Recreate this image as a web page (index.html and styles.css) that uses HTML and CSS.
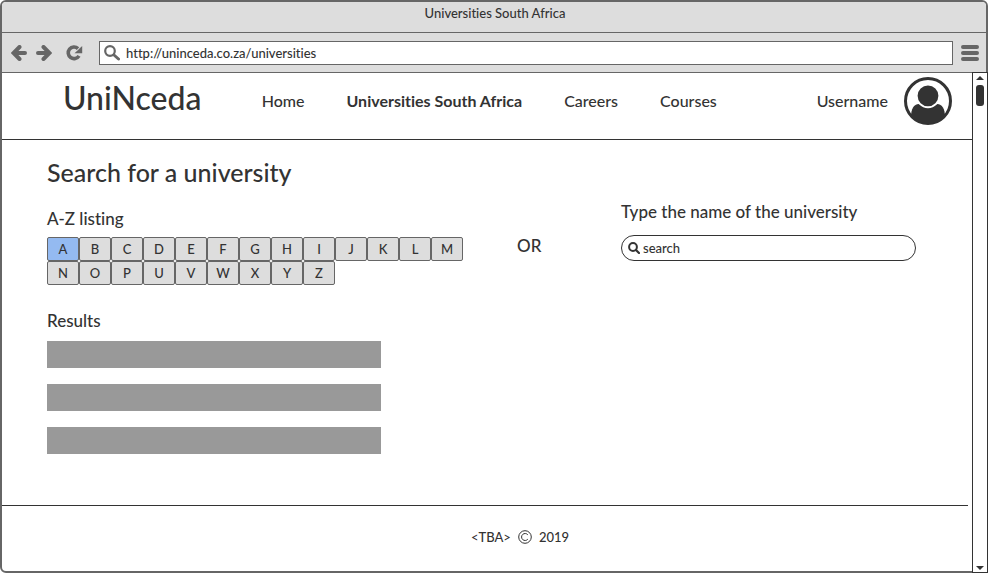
FILE: index.html
```html
<!DOCTYPE html>
<html lang="en">
<head>
<meta charset="utf-8">
<meta name="viewport" content="width=device-width, initial-scale=1">
<title>Universities South Africa</title>
<link rel="stylesheet" href="styles.css">
</head>
<body>
<div class="window">
  <div class="titlebar">Universities South Africa</div>
  <div class="toolbar">
    <div class="controls">
      <button class="icon-button" aria-label="Back"><svg width="16" height="16" viewBox="0 0 16 16"><path d="M8.500 2 2.500 8l6 6M3 8h11" fill="none" stroke="currentColor" stroke-width="4" stroke-linecap="round" stroke-linejoin="miter"/></svg></button>
      <button class="icon-button" aria-label="Forward"><svg width="16" height="16" viewBox="0 0 16 16"><path d="M7.500 2l6 6-6 6M13 8H2" fill="none" stroke="currentColor" stroke-width="4" stroke-linecap="round" stroke-linejoin="miter"/></svg></button>
      <button class="icon-button reload" aria-label="Reload"><svg width="17" height="16" viewBox="0 0 17 16"><path d="M12 3.600A5.800 5.800 0 1 0 13 10.800" fill="none" stroke="currentColor" stroke-width="3.600"/><path d="M16.200 1v7.200H8.500l3-2.600L14 3z" fill="currentColor"/></svg></button>
    </div>
    <label class="address">
      <svg width="16" height="16" viewBox="0 0 16 16" aria-hidden="true"><circle cx="6" cy="6" r="4.800" fill="none" stroke="currentColor" stroke-width="2.200"/><path d="M10 10l4.500 4" stroke="currentColor" stroke-width="3" stroke-linecap="round"/></svg>
      <input type="text" aria-label="Address" value="http://uninceda.co.za/universities">
    </label>
    <button class="icon-button" aria-label="Menu"><svg width="18" height="16" viewBox="0 0 18 16"><path d="M2 2h14M2 8h14M2 14h14" stroke="currentColor" stroke-width="4" stroke-linecap="round"/></svg></button>
  </div>
  <div class="viewport">
    <div class="page">
      <header class="header">
        <a class="brand" href="#">UniNceda</a>
        <nav class="nav">
          <a href="#">Home</a>
          <a class="current" href="#" aria-current="page">Universities South Africa</a>
          <a href="#">Careers</a>
          <a href="#">Courses</a>
        </nav>
        <a class="account" href="#">
          <span>Username</span>
          <svg width="48" height="48" viewBox="0 0 48 48" aria-hidden="true"><circle cx="24" cy="24" r="22.500" fill="#fff" stroke="currentColor" stroke-width="3"/><path d="M7 39c.3-7 2.500-12 8-12h18c5.500 0 7.700 5 8 12A22.500 22.500 0 0 1 7 39z" fill="currentColor"/><circle cx="24" cy="18.800" r="11.400" fill="currentColor" stroke="#fff" stroke-width="2"/></svg>
        </a>
      </header>
      <main class="main">
        <h1>Search for a university</h1>
        <div class="finder">
          <section class="listing">
            <h2>A-Z listing</h2>
            <div class="letters">
              <button class="selected" aria-pressed="true">A</button><button>B</button><button>C</button><button>D</button><button>E</button><button>F</button><button>G</button><button>H</button><button>I</button><button>J</button><button>K</button><button>L</button><button>M</button><button>N</button><button>O</button><button>P</button><button>U</button><button>V</button><button>W</button><button>X</button><button>Y</button><button>Z</button>
            </div>
          </section>
          <p class="or">OR</p>
          <section class="lookup">
            <h2><label for="search">Type the name of the university</label></h2>
            <div class="search">
              <svg width="12" height="12" viewBox="0 0 12 12" aria-hidden="true"><circle cx="5" cy="5" r="3.900" fill="none" stroke="currentColor" stroke-width="2"/><path d="M8 8l3 3" stroke="currentColor" stroke-width="2.200" stroke-linecap="round"/></svg>
              <input id="search" type="search" placeholder="search">
            </div>
          </section>
        </div>
        <section class="results">
          <h2>Results</h2>
          <ul><li></li><li></li><li></li></ul>
        </section>
      </main>
      <footer class="footer">&lt;TBA&gt; <svg width="14" height="14" viewBox="0 0 14 14" role="img" aria-label="Copyright"><circle cx="7" cy="7" r="6.300"/><path d="M9.800 4.800a3.500 3.500 0 1 0 0 4.400"/></svg> 2019</footer>
    </div>
    <div class="scrollbar" aria-hidden="true">
      <svg width="8" height="4" viewBox="0 0 8 4"><path d="M4 0l4 4H0z" fill="currentColor"/></svg>
      <div class="thumb"></div>
      <svg width="8" height="4" viewBox="0 0 8 4"><path d="M4 4L0 0h8z" fill="currentColor"/></svg>
    </div>
  </div>
</div>
</body>
</html>
```

FILE: styles.css
```css
:root {
  --ink: #333;
  --chrome: #666;
  --panel: #ddd;
}

* { box-sizing: border-box; }

body {
  margin: 0;
  color: var(--ink);
  font: 500 13px/20px Lato, "Open Sans", sans-serif;
  font-variant-ligatures: no-common-ligatures;
}

h1, h2, p, ul { margin: 0; padding: 0; font-weight: 500; }
h1 { font-size: 25px; line-height: 32px; }
h2 { font-size: 17px; line-height: 20px; }
a { color: inherit; text-decoration: none; }
button, input { font: inherit; color: inherit; }
svg { display: block; flex: none; }

.window {
  display: flex;
  flex-direction: column;
  min-height: 100vh;
  border: 2px solid var(--chrome);
  border-radius: 6px;
  background: #fff;
}

.titlebar {
  height: 31px;
  padding-top: 1px;
  padding-left: 2px;
  border-bottom: 1px solid var(--chrome);
  border-radius: 4px 4px 0 0;
  background: var(--panel);
  text-align: center;
}

.toolbar {
  display: flex;
  align-items: center;
  height: 40px;
  padding: 0 7px 0 9px;
  border-bottom: 1px solid var(--chrome);
  background: var(--panel);
}

.controls { display: flex; gap: 9px; width: 88px; }

.icon-button {
  padding: 0;
  border: 0;
  background: none;
  color: var(--chrome);
}
.reload { margin-left: 5px; }

.address {
  display: flex;
  flex: 1;
  align-items: center;
  gap: 6px;
  height: 24px;
  margin-right: 8px;
  padding-left: 4px;
  border: 1px solid var(--chrome);
  background: #fff;
  color: var(--chrome);
}

.address input, .search input {
  flex: 1;
  min-width: 0;
  padding: 0;
  border: 0;
  outline: 0;
  background: none;
  color: var(--ink);
}

.viewport { display: flex; flex: 1; }

.page { display: flex; flex: 1; flex-direction: column; min-width: 0; }

.header {
  display: flex;
  align-items: center;
  height: 67px;
  padding: 0 20px 11px 61px;
  border-bottom: 1px solid var(--ink);
  font-size: 16px;
}

.brand {
  width: 21%;
  margin-right: 12px;
  padding-bottom: 6px;
  font-size: 32px;
  line-height: 40px;
}

.nav { display: flex; flex: 1; gap: 42px; }
.current { font-weight: 700; }
.account { display: flex; align-items: center; gap: 16px; }

.main { flex: 1; padding: 16px 45px; }

.finder {
  display: grid;
  grid-template-columns: 470fr 104fr 306fr;
  margin-top: 14px;
}

.listing { padding-top: 7px; }

.letters {
  display: flex;
  flex-wrap: wrap;
  width: 416px;
  max-width: 100%;
  margin-top: 8px;
}
.letters button {
  width: 32px;
  height: 24px;
  padding: 0;
  border: 1px solid var(--chrome);
  border-radius: 2px;
  background: var(--panel);
  line-height: 20px;
}
.letters .selected { background: #94baf1; }

.or { padding-top: 34px; font-size: 17px; }

.search {
  display: flex;
  align-items: center;
  gap: 3px;
  height: 26px;
  width: 295px;
  max-width: 100%;
  margin-top: 13px;
  padding: 0 12px 0 6px;
  border: 1px solid var(--ink);
  border-radius: 13px;
}
.search input::placeholder { color: var(--ink); opacity: 1; }

.results { margin-top: 26px; }
.results ul {
  display: grid;
  gap: 16px;
  width: 38%;
  margin-top: 10px;
  list-style: none;
}
.results li { height: 27px; background: #999; }

.footer {
  display: flex;
  justify-content: center;
  align-items: center;
  gap: 7px;
  height: 66px;
  margin-right: 4px;
  padding: 0 0 4px 70px;
  border-top: 1px solid var(--ink);
}
.footer svg { fill: none; stroke: currentColor; }

.scrollbar {
  display: flex;
  flex-direction: column;
  align-items: center;
  z-index: 1;
  width: 16px;
  margin: -1px -2px -2px 0;
  padding: 3px 0 2px;
  border: 1px solid var(--ink);
  background: #fff;
}
.thumb {
  width: 8px;
  height: 21px;
  margin: 5px 0 auto;
  border-radius: 3px;
  background: var(--ink);
}
```
